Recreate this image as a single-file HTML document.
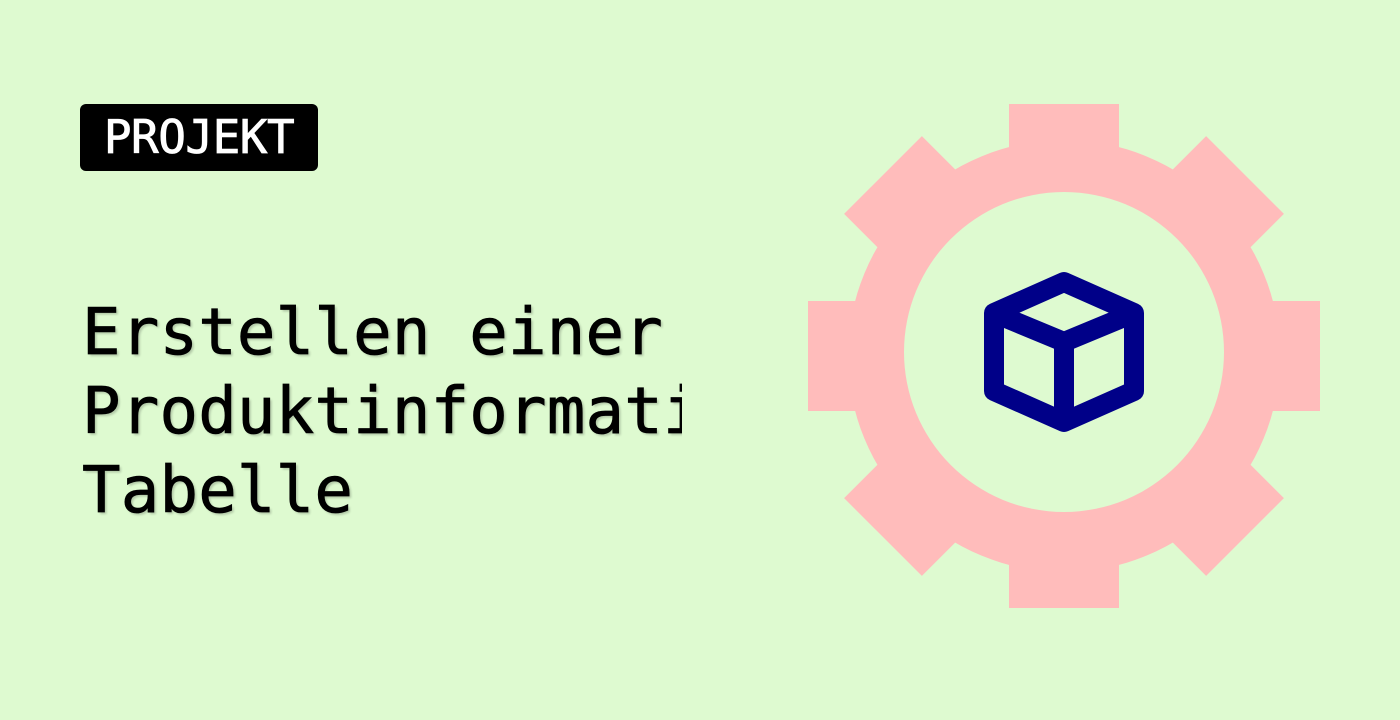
<!DOCTYPE html>
<html><head><meta charset="utf-8"><style>
html,body{margin:0;padding:0;}
body{width:1400px;height:720px;background:#defad0;position:relative;overflow:hidden;font-family:"DejaVu Sans Mono","Liberation Mono",monospace;}
.badge{position:absolute;left:80px;top:104px;width:238px;height:67px;background:#000;border-radius:6px;color:#fff;font-size:46px;line-height:67px;text-align:center;letter-spacing:-0.5px;-webkit-text-stroke:0.8px #fff;}
.title{position:absolute;left:82px;top:294px;width:600px;overflow:hidden;white-space:nowrap;font-size:64px;line-height:79px;color:#000;text-shadow:2px 2px 2px rgba(0,0,0,0.2);letter-spacing:0.2px;-webkit-text-stroke:0.8px #000;}
svg{position:absolute;left:0;top:0;}
</style></head><body>
<div class="badge">PROJEKT</div>
<div class="title">Erstellen einer<br>Produktinformation<br>Tabelle</div>
<svg width="1400" height="720">
<g fill="#ffbcbb" transform="translate(1064 356)">
<circle r="216"/>
<rect x="-55" y="-252" width="110" height="504"/>
<rect x="-55" y="-256" width="110" height="512" transform="rotate(45)"/>
<rect x="-55" y="-256" width="110" height="512" transform="rotate(90)"/>
<rect x="-55" y="-256" width="110" height="512" transform="rotate(135)"/>
</g>
<circle cx="1064" cy="352" r="160" fill="#defad0"/>
<g fill="none" stroke="#000088" stroke-width="20" stroke-linejoin="round">
<path d="M1064 282 L1134 313 V391 L1064 422 L994 391 V313 Z"/>
<path d="M994 313 L1064 342 L1134 313 M1064 342 V422"/>
</g>
</svg>
</body></html>
